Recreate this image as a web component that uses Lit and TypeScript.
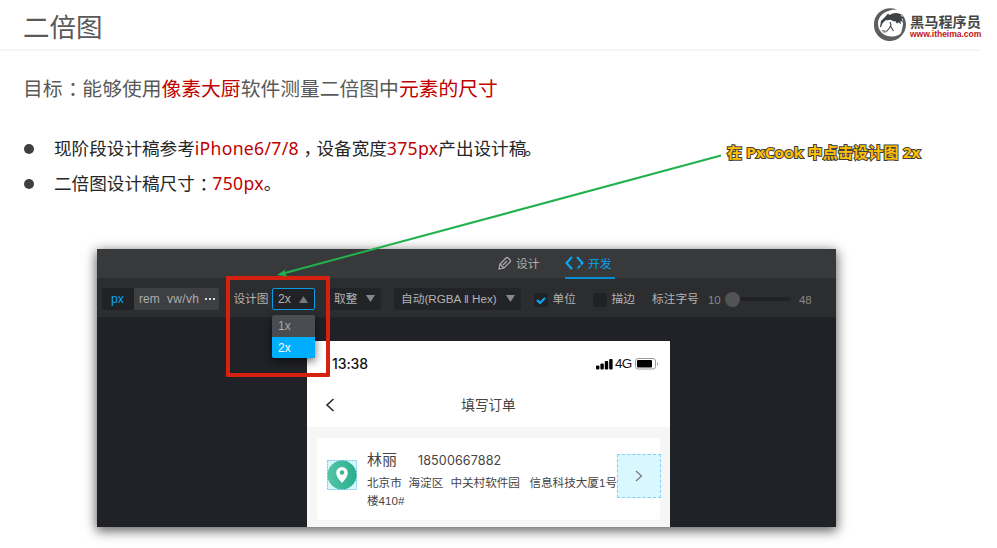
import { LitElement, html, css, svg } from "lit";
import { customElement } from "lit/decorators.js";

@customElement("px-toolbar")
class PxToolbar extends LitElement {
  static styles = css`
    :host { display: flex; height: 39px; padding-top: 9px; box-sizing: border-box; background: #2c2d2f;
      color: #b3b3b4; font: 11.7px/22px "Liberation Sans", "Noto Sans CJK SC", sans-serif; white-space: nowrap; border-bottom: 1px solid #232427; }
    span, div { box-sizing: border-box; height: 22px; flex: none; }
    .px { width: 32px; margin-left: 5px; padding-left: 9px; background: #212225; color: #0aa5f5; border-radius: 2px 0 0 2px; font-size: 12.2px; }
    .units { width: 85px; display: flex; background: #3e3f42; border-radius: 0 2px 2px 0; padding-left: 5px; color: #adadae; font-size: 12px; }
    .rem { width: 28px; }
    .vw { width: 38px; letter-spacing: .3px; }
    .dots { display: flex; gap: 2px; align-items: center; }
    .dots i { width: 2px; height: 2px; background: #ddd; }
    .label { width: 38px; margin-left: 15px; text-indent: -.6px; }
    .select { width: 43px; border: 1px solid #0b9be6; border-radius: 2px; background: #212225; padding-left: 5px; font-size: 12.2px; line-height: 20px; display: flex; }
    .select svg { margin: 7px 0 0 8.5px; }
    .combo { background: #232427; border-radius: 2px; display: flex; justify-content: space-between; padding-right: 6px; }
    .combo svg { margin-top: 7px; }
    .round { width: 52px; margin-left: 14px; padding-left: 5px; }
    .auto { width: 127px; margin-left: 13px; padding-left: 7px; }
    .check { width: 14px; height: 14px; margin-top: 5px; background: #212225; border-radius: 2px; }
    .check svg { display: block; }
    .first { margin-left: 13px; }
    .second { margin-left: 16px; }
    .name { margin-left: 4.5px; width: 24.5px; }
    .size { margin-left: 16px; width: 56px; }
    .num { color: #88898a; width: 17px; letter-spacing: -.2px; font-size: 11.5px; padding-top: 1px; }
    .slider { width: 66px; display: flex; align-items: center; margin: 0 8px 0 0; }
    .slider b { width: 15px; height: 15px; border-radius: 50%; background: #535356; }
    .slider i { flex: 1; height: 4px; border-radius: 2px; background: #212225; }
  `;
  render() {
    const down = html`<svg width="9" height="8"><path d="M0 0h9L4.5 7z" fill="#88898b" /></svg>`;
    return html`
      <span class="px">px</span>
      <div class="units"><span class="rem">rem</span><span class="vw">vw/vh</span><span class="dots"><i></i><i></i><i></i></span></div>
      <span class="label">设计图</span>
      <div class="select">2x<svg width="9" height="8"><path d="M0 7h9L4.5 0z" fill="#77787a" /></svg></div>
      <div class="combo round"><span>取整</span>${down}</div>
      <div class="combo auto"><span>自动(RGBA ‖ Hex)</span>${down}</div>
      <div class="check first"><svg width="14" height="14"><path d="M3 7l3 3 5-5" fill="none" stroke="#08aaff" stroke-width="2" /></svg></div>
      <span class="name">单位</span>
      <div class="check second"></div><span class="name">描边</span>
      <span class="size">标注字号</span><span class="num">10</span>
      <div class="slider"><b></b><i></i></div><span class="num">48</span>
    `;
  }
}

@customElement("order-phone")
class OrderPhone extends LitElement {
  static styles = css`
    :host { display: block; width: 363px; height: 186px; background: #f6f6f7; overflow: hidden; color: #444;
      font-family: "Liberation Sans", "Noto Sans CJK SC", sans-serif; white-space: nowrap; }
    .status { height: 45px; background: #fff; display: flex; align-items: center; padding: 0 12px 0 25px; box-sizing: border-box; color: #111; }
    .time { font: 500 14px/20px Inter, sans-serif; letter-spacing: -.1px; flex: 1; }
    .status svg { display: block; }
    .net { font: 13.5px/20px "Liberation Sans", sans-serif; width: 20px; letter-spacing: -.8px; }
    .nav { height: 41px; background: #fff; display: flex; align-items: center; padding: 0 18px; box-sizing: border-box; }
    .nav svg { margin-top: -3px; }
    .title { flex: 1; text-align: center; font-size: 13.6px; line-height: 20px; margin: -2px 10px 0 0; }
    .card { display: flex; margin: 11px 10px 0; height: 82px; background: #fff; border-radius: 4px; }
    .pin { width: 30px; height: 30px; margin: 22px 0 0 10px; flex: none; }
    .info { margin: 10px 0 0 10px; width: 250px; flex: none; }
    .who { display: flex; font-size: 15px; line-height: 23px; height: 25px; }
    .who span { width: 51px; }
    .who b { font: 12.6px/25px Inter, sans-serif; letter-spacing: .1px; }
    .addr { display: flex; font-size: 11.6px; line-height: 20px; height: 17.5px; }
    .a1 { width: 42.500px; } .a2 { width: 43px; } .a3 { width: 81px; }
    .go { width: 44px; height: 44px; margin-top: 16px; flex: none; background: #d9f7ff; outline: 1px dashed #83cdf6; outline-offset: -1px; display: grid; place-items: center; }
  `;
  render() {
    return html`
      <div class="status">
        <span class="time">13:38</span>
        <svg width="19" height="12"><rect y="7.5" width="3.4" height="4" rx="1" /><rect x="4.4" y="5.5" width="3.4" height="6" rx="1" /><rect x="8.8" y="3" width="3.4" height="8.5" rx="1" /><rect x="13.2" y="1" width="3.4" height="10.5" rx="1" /></svg>
        <span class="net">4G</span>
        <svg width="23" height="12"><rect x=".5" y=".5" width="20" height="10.5" rx="2.5" fill="none" stroke="#999" /><rect x="2" y="2" width="15" height="7.5" rx="1" /><path d="M22 4q2 2 0 4z" fill="#999" /></svg>
      </div>
      <div class="nav">
        <svg width="10" height="14"><path d="M8.5 1L2 7l6.5 6" fill="none" stroke="#222" stroke-width="1.5" /></svg>
        <span class="title">填写订单</span>
      </div>
      <div class="card">
        <svg class="pin" viewBox="0 0 30 30">
          <defs><linearGradient id="g"><stop stop-color="#55c5a7" /><stop offset="1" stop-color="#27ae8c" /></linearGradient></defs>
          <rect x=".5" y=".5" width="29" height="29" fill="#d9f7ff" stroke="#70c7f5" stroke-dasharray="2 1" />
          <circle cx="15" cy="15" r="14.5" fill="url(#g)" />
          <path d="M15 23C12 19.5 9.2 16.5 9.2 12.8a5.8 5.8 0 0 1 11.6 0C20.8 16.5 18 19.5 15 23z" fill="#fff" /><circle cx="15" cy="12.5" r="2.2" fill="#37b494" />
        </svg>
        <div class="info">
          <div class="who"><span>林丽</span><b>18500667882</b></div>
          <div class="addr"><span class="a1">北京市</span><span class="a2">海淀区</span><span class="a3">中关村软件园</span><span>信息科技大厦1号</span></div>
          <div class="addr">楼410#</div>
        </div>
        <div class="go"><svg width="8" height="12"><path d="M1 1l5.5 5L1 11" fill="none" stroke="#777" stroke-width="1.2" /></svg></div>
      </div>
    `;
  }
}

@customElement("app-root")
class AppRoot extends LitElement {
  static styles = css`
    :host { display: block; position: relative; width: 997px; height: 548px; overflow: hidden; background: #fff;
      font-family: "Noto Sans", "Noto Sans CJK SC", sans-serif; white-space: nowrap; }
    header { height: 51px; box-sizing: border-box; border-bottom: 2px solid #f5f5f5; width: 981px; display: flex; justify-content: space-between; padding-left: 23px; }
    h1 { margin: 6px 0 0; font: 26.5px/40px "Noto Sans CJK SC", sans-serif; color: #595959; }
    .logo { display: flex; width: 108px; padding-top: 7px; }
    .logo svg { flex: none; width: 37px; height: 35px; }
    .brand { font: bold 14.2px/16px "Noto Sans CJK SC", sans-serif; color: #454545; margin-top: 6px; height: 15px; }
    .url { font: bold 8.6px/11px "Liberation Sans", sans-serif; color: #c01818; letter-spacing: -.07px; padding-top: .5px; }
    .goal { font: 19.8px/30px "Noto Sans CJK SC", sans-serif; color: #595959; margin: 22px 0 0 23px; }
    em { font-style: normal; color: #c00000; }
    ul { list-style: none; margin: 28px 0 0; padding: 0 0 0 24px; color: #262626; font-size: 17.6px; line-height: 33px; height: 70px; }
    li em { letter-spacing: .3px; }
    li { display: flex; align-items: center; height: 35px; }
    li > span { padding-bottom: 2px; }
    li::before { content: ""; width: 10px; height: 10px; border-radius: 50%; background: #404040; margin-right: 20px; }
    .punct { font-family: "Noto Sans CJK SC", sans-serif; font-feature-settings: "halt"; padding: 0 .23em 0 .27em; }
    .end { margin-left: -2px; }
    .window { width: 739px; height: 278px; margin: 48px 0 0 97px; background: #212227; box-shadow: 0 3px 11px 1px rgba(0,0,0,.62); }
    .tabs { height: 30px; box-sizing: border-box; padding-left: 401px; display: flex; background: #38393b; font: 11.8px/28px "Noto Sans CJK SC", sans-serif; color: #aeaeaf; border-bottom: 1px solid #2d2e30; }
    .tab { display: flex; align-items: center; gap: 4px; width: 67px; height: 28px; }
    .active { width: 50px; color: #08a2ef; border-bottom: 2px solid #078fd3; box-sizing: border-box; height: 30px; }
    order-phone { margin: 23px 0 0 210px; }
    .menu { position: absolute; left: 272px; top: 315px; width: 43px; height: 43px; border-radius: 2px; overflow: hidden; background: #494c50; color: #aaa; font: 12px/22px "Liberation Sans", sans-serif; box-shadow: 0 3px 8px rgba(0,0,0,.6); }
    .menu div { padding-left: 6px; height: 22px; }
    .menu .on { background: #00aeff; color: #fff; }
    .frame { position: absolute; left: 226px; top: 276px; width: 104px; height: 101px; box-sizing: border-box; border: 4px solid #d82010; border-radius: 1px; }
    .arrow { position: absolute; left: 0; top: 0; pointer-events: none; }
    .note { position: absolute; left: 727px; top: 141px; font: bold 15px/22px "Noto Sans", "Noto Sans CJK SC", sans-serif; letter-spacing: .22px; color: #ffc000; -webkit-text-stroke: 2px #404040; paint-order: stroke fill; }
  `;
  render() {
    return html`
      <header>
        <h1>二倍图</h1>
        <div class="logo">
          <svg viewBox="0 0 37 35">
            <path d="M24 2.5C12-2 1 6 1 17a15.800 15.800 0 0 0 31.500 2.500C30 27 23.500 30 17.500 29.500C10 29 5 23.500 5 16.500C5 9 12 2.500 24 2.500z" fill="#5b5d5e" />
            <path d="M29 7.5C36 15 33 26 26 30Q32 20 29 7.5z" fill="#5b5d5e" />
            <path d="M7 20l1-6 4-4 3-3.500 1.500 1.500q6-4 13 0l-2 .5 4 3-3 .2 2 3.500-3-1.500.5 3.500-2.500-2-1.500 1.500-1.500-2.500-2 0-3-1.500-3 .5-2 0-3 3-1.500 4z" fill="#3e4244" />
            <path d="M17 15l1 3-1.500 3-3.500 4M17.500 19l3 5" fill="none" stroke="#3e4244" stroke-width="1.1" />
            <path d="M8 23l3 3 3-1-2-2z" fill="#999" />
          </svg>
          <div><div class="brand">黑马程序员</div><div class="url">www.itheima.com</div></div>
        </div>
      </header>
      <div class="goal">目标<span class="punct">：</span>能够使用<em>像素大厨</em>软件测量二倍图中<em>元素的尺寸</em></div>
      <ul>
        <li><span>现阶段设计稿参考<em>iPhone6/7/8</em><span class="punct">，</span>设备宽度<em>375px</em>产出设计稿<span class="end">。</span></span></li>
        <li><span>二倍图设计稿尺寸<span class="punct">：</span><em>750px</em>。</span></li>
      </ul>
      <div class="window">
        <div class="tabs">
          <div class="tab"><svg width="14" height="14" fill="none" stroke="#aeaeaf" stroke-width="1.2"><path d="M1 13l1-5 6-6q1-1 2 0l2 2q1 1 0 2l-6 6zM2 8l4 4M5 9l4-4" /></svg>设计</div>
          <div class="tab active"><svg width="19" height="14" fill="none" stroke="#08aaff" stroke-width="2"><path d="M7 1L1.5 7 7 13" /><path d="M12 1l5.5 6-5.5 6" stroke-dasharray="10.5 1.2 3 1.2" /></svg>开发</div>
        </div>
        <px-toolbar></px-toolbar>
        <order-phone></order-phone>
      </div>
      <div class="menu"><div>1x</div><div class="on">2x</div></div>
      <div class="frame"></div>
      <svg class="arrow" width="997" height="548">${svg`<path d="M721 155.5L283 273.5" stroke="#22b14c" stroke-width="2" /><path d="M277 275l8.5-5.5-1.5 3.6 3.5 3.4z" fill="#22b14c" />`}</svg>
      <div class="note">在 PxCook 中点击设计图 2x</div>
    `;
  }
}
